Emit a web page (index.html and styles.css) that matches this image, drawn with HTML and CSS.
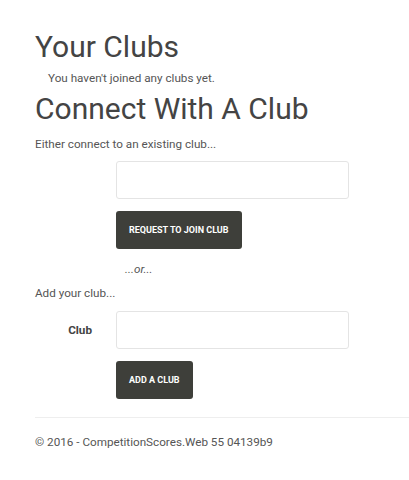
FILE: index.html
```html
<!DOCTYPE html>
<html lang="en">
<head>
    <meta charset="UTF-8">
    <meta name="viewport" content="width=device-width, initial-scale=1.0">
    <title>Your Clubs</title>
    <link rel="stylesheet" href="styles.css">
</head>
<body>
    <div class="container">
        <h1>Your Clubs</h1>
        <p class="empty-note">You haven't joined any clubs yet.</p>

        <h1>Connect With A Club</h1>
        <p>Either connect to an existing club...</p>

        <form class="club-form">
            <div class="form-row">
                <div></div>
                <input type="text" class="form-control">
            </div>
            <div class="form-row">
                <div></div>
                <div><button type="button" class="btn">Request to join club</button></div>
            </div>
        </form>

        <p class="or-line">...or...</p>

        <p>Add your club...</p>

        <form class="club-form">
            <div class="form-row">
                <label class="form-label">Club</label>
                <input type="text" class="form-control">
            </div>
            <div class="form-row">
                <div></div>
                <div><button type="button" class="btn">Add a club</button></div>
            </div>
        </form>

        <hr>
        <footer>
            <p>&copy; 2016 - CompetitionScores.Web 55 04139b9</p>
        </footer>
    </div>
</body>
</html>
```

FILE: styles.css
```css
body {
    margin: 0;
    font-family: Roboto, "Helvetica Neue", Arial, sans-serif;
    font-size: 11.7px;
    color: #555;
    background: #fff;
}
.container {
    padding: 0 0 0 35px;
}
h1 {
    font-size: 30px;
    font-weight: 400;
    color: #444;
    line-height: 1.1;
    margin: 30px 0 0;
}
h1 + p {
    margin-top: 11px;
}
h1 + .empty-note {
    margin-top: 7px;
}
p {
    margin: 0;
    line-height: 1.4;
}
.empty-note {
    padding-left: 13px;
}
.empty-note + h1 {
    margin-top: 6px;
}
.club-form {
    margin-top: 8px;
}
.form-row {
    display: grid;
    grid-template-columns: 81px 233px;
    align-items: center;
    margin-bottom: 12px;
}
.form-label {
    text-align: right;
    padding-right: 24px;
    font-weight: 700;
    color: #444;
}
.form-control {
    box-sizing: border-box;
    height: 38px;
    width: 100%;
    border: 1px solid #e4e4e4;
    border-radius: 3px;
    background: #fff;
    margin: 0;
}
.btn {
    height: 38px;
    padding: 0 13px;
    background: #3e3f3a;
    color: #fff;
    border: none;
    border-radius: 3px;
    font-family: inherit;
    font-size: 9px;
    font-weight: 700;
    text-transform: uppercase;
}
.or-line {
    padding-left: 90px;
    font-style: italic;
    margin-top: 3px;
}
.or-line + p {
    margin-top: 8px;
}
.or-line + p + .club-form {
    margin-top: 9px;
}
hr {
    border: 0;
    border-top: 1px solid #eee;
    margin: 18px 0 16px;
}
footer p {
    color: #555;
}
```
